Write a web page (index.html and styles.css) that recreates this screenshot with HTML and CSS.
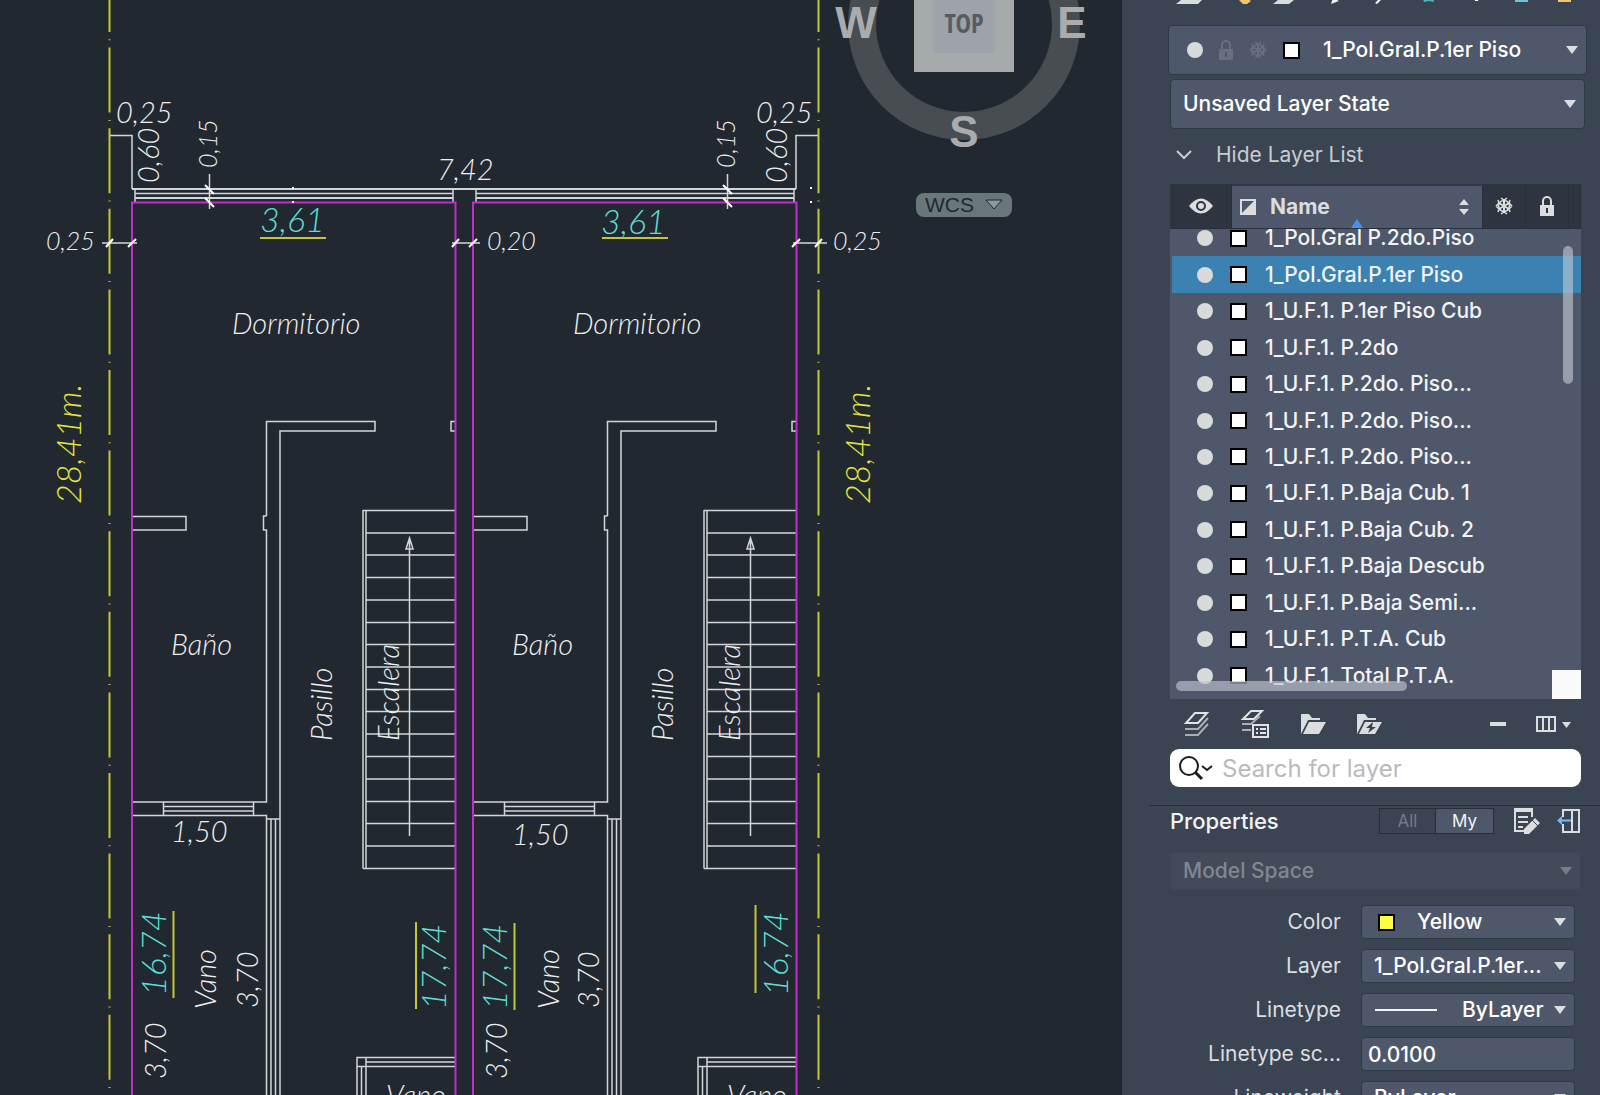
FILE: index.html
```html
<!DOCTYPE html>
<html lang="en">
<head>
<meta charset="utf-8">
<title>Floor plan – layers</title>
<link rel="stylesheet" href="styles.css">
</head>
<body>
<div class="app">
<main class="canvas">
<svg class="plan" viewBox="0 0 1121 1095" preserveAspectRatio="xMinYMin slice" role="img" aria-label="First floor plan">
  <defs>
    <g id="unit">
      <path class="wall" d="M135 193.5H453M135 189V202M453 189V202"/>
      <path class="wall heavy" d="M135 198H453"/>
      <path class="wall" d="M266.5 516V421.500H375V431H280V1095M266.500 516H263.500V530H266.500V802H132M132 516.500H186V530H132M455 421.500H451V431H455"/>
      <path class="wall" d="M132 815.500H266.500V1095M163.500 802V815.500M253.500 802V815.500M163.500 806.500H253.500M163.500 811H253.500M266.500 819H280M271 819V1095M275.500 819V1095"/>
      <path class="wall" d="M363 868.500V510M366 510V868.500M363 510.500H455M366 533H455M366 555H455M366 577.500H455M366 600H455M366 622.500H455M366 644.500H455M366 667H455M366 689.500H455M366 711.500H455M366 734H455M366 756.500H455M366 779H455M366 801.500H455M366 823.500H455M366 846H455M363 868.500H455"/>
      <path class="wall" d="M409.500 836V538M406 549L409.500 538L413 549Z"/>
      <path class="wall" d="M357 1095V1057.500H455M357 1066.500H455M366 1057.500V1095M366 1062H455M361.500 1066V1095"/>
      <path class="lot" d="M132 1095V202.500H455.500V1095"/>
    </g>
  </defs>
  <path class="axis" d="M109.500 -33V1095M818.500 -33V1095"/>
  <path class="wall" d="M110 135.500H132V189M796 189V135.500H818"/>
  <path class="wall heavy" d="M132 189H796"/>
  <use href="#unit"/>
  <use href="#unit" x="341"/>
  <path class="wall" d="M209.500 174V209M727.500 174V209M102 243H137M452 243H480M793 243H827"/>
  <path class="tick" d="M205 185L214 194M205 198L214 207M723 185L732 194M723 198L732 207M106 247L113 239M128 247L136 239M452 247L459 239M469 247L477 239M792 247L800 239M815 247L822 239"/>
  <path class="dots" d="M292 188h2M292 202h2M810 188h2M810 202h2"/>
  <path class="mark" d="M260 238H326M602 238H668M173.500 911V998M416 922V1009M514.500 923V1010M755.500 905V993"/>
  <g class="note">
    <text x="116" y="123">0,25</text><text x="756" y="123">0,25</text><text x="437" y="180">7,42</text>
    <text x="232" y="334">Dormitorio</text><text x="573" y="334">Dormitorio</text>
    <text x="171" y="655">Baño</text><text x="512" y="655">Baño</text>
    <text x="171" y="842">1,50</text><text x="512" y="845">1,50</text>
    <text x="386" y="1106">Vano</text><text x="727" y="1106">Vano</text>
    <text transform="translate(159 183) rotate(-90)">0,60</text><text transform="translate(787 183) rotate(-90)">0,60</text>
    <text transform="translate(332 741) rotate(-90)">Pasillo</text><text transform="translate(673 741) rotate(-90)">Pasillo</text>
    <text transform="translate(399 741) rotate(-90)">Escalera</text><text transform="translate(740 741) rotate(-90)">Escalera</text>
    <text transform="translate(216 1009) rotate(-90)">Vano</text><text transform="translate(559 1009) rotate(-90)">Vano</text>
    <text transform="translate(258 1008) rotate(-90)">3,70</text><text transform="translate(599 1008) rotate(-90)">3,70</text>
    <text transform="translate(166 1079) rotate(-90)">3,70</text><text transform="translate(507 1079) rotate(-90)">3,70</text>
  </g>
  <g class="note small">
    <text x="46" y="250">0,25</text><text x="487" y="250">0,20</text><text x="833" y="250">0,25</text>
    <text transform="translate(217 168) rotate(-90)">0,15</text><text transform="translate(735 168) rotate(-90)">0,15</text>
  </g>
  <g class="note measure">
    <text x="260" y="232">3,61</text><text x="601" y="234">3,61</text>
    <text transform="translate(166 996) rotate(-90)">16,74</text><text transform="translate(788 996) rotate(-90)">16,74</text>
    <text transform="translate(446 1010) rotate(-90)">17,74</text><text transform="translate(507 1010) rotate(-90)">17,74</text>
  </g>
  <g class="note length">
    <text transform="translate(81 504) rotate(-90)">28,41m.</text><text transform="translate(870 504) rotate(-90)">28,41m.</text>
  </g>
</svg>
<div class="viewcube">
  <svg width="260" height="160" viewBox="0 0 260 160" role="img" aria-label="View cube">
    <circle cx="130" cy="24" r="102" fill="none" stroke="#484d51" stroke-width="28"/>
    <path d="M80-10H180V72H80z" fill="#a7aaab"/><path d="M99-10H161V53H99z" fill="#9da3a8"/>
    <text class="face" x="130" y="33">TOP</text>
    <g class="compass"><text x="22" y="38">W</text><text x="238" y="38">E</text><text x="130" y="147">S</text></g>
  </svg>
  <button class="wcs" type="button">WCS <svg width="18" height="12" viewBox="0 0 18 12"><path d="M1 1H17L9 10Z" fill="#8d9899" stroke="#1f292d" stroke-width="1"/></svg></button>
</div>
</main>

<aside class="panel">
  <svg class="tools" width="411" height="25" viewBox="0 0 411 25" aria-hidden="true">
    <path d="M11 0H32L28 4H6zM108 0H124L119 4H103z" fill="#d9dcde"/><path d="M69 0l7-2 5 3-4 3h-4z" fill="#f3c56c"/>
    <path d="M163-2l6 3-8 3zM212-1l-5 5-2-1 4-4zM304-2h5l-1 3h-3z" fill="#f0f2f3"/>
    <path d="M252-4h11l1 6-5-1-5 1z" fill="#4fb3bf"/><path d="M345-4h13v6h-13z" fill="#6cc5d5"/><path d="M388-4h13v6h-13z" fill="#f3c56c"/>
  </svg>
  <div class="field current">
    <span class="prefix"><i class="bulb"></i>
      <svg class="dim" width="14" height="20" viewBox="0 0 14 20"><path d="M3 9V5a4 4 0 0 1 8 0V9" fill="none" stroke="currentColor" stroke-width="2"/><path d="M0 9H14V20H0zM6 12V17H8V12z" fill="currentColor" fill-rule="evenodd"/></svg>
      <svg class="dim" width="18" height="18" viewBox="0 0 18 18"><use href="#flake"/></svg>
      <i class="swatch"></i></span>
    <select aria-label="Current layer"><option>1_Pol.Gral.P.1er Piso</option></select>
  </div>
  <div class="field state"><select aria-label="Layer state"><option>Unsaved Layer State</option></select></div>
  <button class="toggle" type="button"><svg width="16" height="10" viewBox="0 0 16 10"><path d="M1 1L8 8L15 1" fill="none" stroke="currentColor" stroke-width="2"/></svg>Hide Layer List</button>

  <div class="layers">
  <table>
    <thead><tr>
      <th><svg width="24" height="16" viewBox="0 0 24 16"><path d="M0 8Q12-7 24 8Q12 23 0 8z" fill="#dcdddf"/><circle cx="12" cy="8" r="4" fill="#dcdddf" stroke="#2e3440" stroke-width="2"/></svg></th>
      <th class="name"><svg width="16" height="16" viewBox="0 0 16 16"><path d="M1 1H15V15H1z" fill="none" stroke="#dcdddf" stroke-width="2"/><path d="M14 2V14H2z" fill="#dcdddf"/></svg><span>Name</span><svg class="sort" width="10" height="16" viewBox="0 0 10 16"><path d="M0 6L5 0L10 6zM0 10L5 16L10 10z" fill="#dcdddf"/></svg></th>
      <th><svg width="18" height="18" viewBox="0 0 18 18"><g id="flake" fill="none" stroke="currentColor"><circle cx="9" cy="9" r="5.500" stroke-width="1.500"/><path stroke-width="2" d="M9 3V15M4 6L14 12M14 6L4 12"/><path stroke-width="1.500" d="M6 1L9 3L12 1M6 17L9 15L12 17M1 9L4 6L3 3M17 9L14 6L15 3M1 9L4 12L3 15M17 9L14 12L15 15"/></g></svg></th>
      <th><svg width="14" height="20" viewBox="0 0 14 20"><path d="M3 9V5a4 4 0 0 1 8 0V9" fill="none" stroke="currentColor" stroke-width="2"/><path d="M0 9H14V20H0zM6 12V17H8V12z" fill="currentColor" fill-rule="evenodd"/></svg></th>
      <th></th>
    </tr></thead>
    <tbody>
      <tr><td><i class="bulb"></i></td><td><i class="swatch"></i></td><td>1_Pol.Gral P.2do.Piso</td></tr>
      <tr class="selected"><td><i class="bulb"></i></td><td><i class="swatch"></i></td><td>1_Pol.Gral.P.1er Piso</td></tr>
      <tr><td><i class="bulb"></i></td><td><i class="swatch"></i></td><td>1_U.F.1. P.1er Piso Cub</td></tr>
      <tr><td><i class="bulb"></i></td><td><i class="swatch"></i></td><td>1_U.F.1. P.2do</td></tr>
      <tr><td><i class="bulb"></i></td><td><i class="swatch"></i></td><td>1_U.F.1. P.2do. Piso...</td></tr>
      <tr><td><i class="bulb"></i></td><td><i class="swatch"></i></td><td>1_U.F.1. P.2do. Piso...</td></tr>
      <tr><td><i class="bulb"></i></td><td><i class="swatch"></i></td><td>1_U.F.1. P.2do. Piso...</td></tr>
      <tr><td><i class="bulb"></i></td><td><i class="swatch"></i></td><td>1_U.F.1. P.Baja Cub. 1</td></tr>
      <tr><td><i class="bulb"></i></td><td><i class="swatch"></i></td><td>1_U.F.1. P.Baja Cub. 2</td></tr>
      <tr><td><i class="bulb"></i></td><td><i class="swatch"></i></td><td>1_U.F.1. P.Baja Descub</td></tr>
      <tr><td><i class="bulb"></i></td><td><i class="swatch"></i></td><td>1_U.F.1. P.Baja Semi...</td></tr>
      <tr><td><i class="bulb"></i></td><td><i class="swatch"></i></td><td>1_U.F.1. P.T.A. Cub</td></tr>
      <tr><td><i class="bulb"></i></td><td><i class="swatch"></i></td><td>1_U.F.1. Total P.T.A.</td></tr>
    </tbody>
  </table>
  <i class="bar-v"></i><i class="bar-h"></i><i class="corner"></i>
  </div>

  <div class="actions">
    <button type="button" aria-label="New layer"><svg width="26" height="26" viewBox="0 0 26 26" fill="none"><path d="M11 2H23L14 12H2z" stroke="#e2e3e5" stroke-width="2"/><path d="M1 18H14L24 7M1 24H14L24 13" stroke="#a9adb4" stroke-width="2"/></svg></button>
    <button type="button" aria-label="Layer states"><svg width="30" height="30" viewBox="0 0 30 30" fill="none"><path d="M11 2H22L14 10H3z" stroke="#e2e3e5" stroke-width="2"/><path d="M2 15H11L20 7M2 21H11" stroke="#a9adb4" stroke-width="2"/><path d="M13 16H28V28H13z" fill="#3b4352" stroke="#e2e3e5" stroke-width="2"/><path d="M16 20h2M20 20h6M16 24h2M20 24h6" stroke="#e2e3e5" stroke-width="2"/></svg></button>
    <button type="button" aria-label="New group"><svg width="26" height="20" viewBox="0 0 26 20"><path d="M1 20V0H9L12 4H20V6H8zM9 8H26L19 20H3z" fill="#dcdddf"/></svg></button>
    <button type="button" aria-label="New dynamic group"><svg width="26" height="20" viewBox="0 0 26 20"><path d="M1 20V0H9L12 4H20V6H8zM9 8H26L19 20H3z" fill="#dcdddf"/><path d="M17 8L10 14H14L12 19L20 13H16z" fill="#3b4352"/></svg></button>
    <button class="minus" type="button" aria-label="Remove layer"><svg width="16" height="4" viewBox="0 0 16 4"><path d="M0 0H16V4H0z" fill="#dcdddf"/></svg></button>
    <button type="button" aria-label="Columns"><svg width="36" height="18" viewBox="0 0 36 18"><path d="M1 2H19V16H1zM7 2V16M13 2V16" fill="none" stroke="#dcdddf" stroke-width="2"/><path d="M26 7H35L30.500 13z" fill="#dcdddf"/></svg></button>
  </div>

  <label class="search">
    <svg width="34" height="26" viewBox="0 0 34 26" fill="none" stroke="#1c1c1e" stroke-width="2"><circle cx="10" cy="11" r="9"/><path d="M16 17L23 24" stroke-width="3"/><path d="M23 11L28 15L33 11"/></svg>
    <input type="text" placeholder="Search for layer" aria-label="Search for layer">
  </label>

  <section class="props">
    <header>
      <h2>Properties</h2>
      <div class="segment"><button type="button">All</button><button class="on" type="button">My</button></div>
      <button type="button" aria-label="Customize"><svg width="28" height="28" viewBox="0 0 28 28"><path d="M11 24H2V2H19V10" fill="none" stroke="#dcdddf" stroke-width="2"/><path d="M1 1H20V5H1zM5 9H15V11H5zM5 14H15V16H5zM5 19H10V21H5zM22 11L27 16L16 27H11V22z" fill="#dcdddf"/><path d="M19 13L25 19" stroke="#3b4352"/></svg></button>
      <button type="button" aria-label="Dock"><svg width="24" height="26" viewBox="0 0 24 26" fill="none"><path d="M6 9V2H22V24H6V16M15 2V24" stroke="#dcdddf" stroke-width="2"/><path d="M3 12.500H14" stroke="#78b8f0" stroke-width="2"/><path d="M0 12.500L5 8V17z" fill="#78b8f0"/></svg></button>
    </header>
    <div class="field space"><select disabled aria-label="Space"><option>Model Space</option></select></div>
    <div class="grid">
      <label for="color">Color</label><div class="field color"><span class="prefix"><i class="swatch yellow"></i></span><select id="color"><option>Yellow</option></select></div>
      <label for="layer">Layer</label><div class="field"><select id="layer"><option>1_Pol.Gral.P.1er...</option></select></div>
      <label for="ltype">Linetype</label><div class="field ltype"><span class="prefix"><i class="line"></i></span><select id="ltype"><option>ByLayer</option></select></div>
      <label for="scale">Linetype sc...</label><input id="scale" type="text" value="0.0100">
      <label for="lweight">Lineweight</label><div class="field"><select id="lweight"><option>ByLayer</option></select></div>
    </div>
  </section>
</aside>
</div>
</body>
</html>
```
FILE: styles.css
```css
* { box-sizing: border-box; }
body { margin: 0; background: #222830; color: #f2f3f5; font: 21px/24px Inter, "Liberation Sans", sans-serif; }
button, select, input { font: inherit; color: inherit; margin: 0; }
button { background: none; border: 0; padding: 0; display: flex; align-items: center; }
svg { display: block; flex: none; }
.app { display: flex; height: 100vh; overflow: hidden; }

/* drawing area */
.canvas { flex: 1; min-width: 0; position: relative; overflow: hidden; background: #22282f; }
.plan { width: 100%; height: 100%; }
.wall { fill: none; stroke: #d3d6d8; stroke-width: 1.5; }
.heavy { stroke-width: 2; }
.lot { fill: none; stroke: #c22ccb; stroke-width: 2; }
.axis { fill: none; stroke: #c3c735; stroke-width: 2; stroke-dasharray: 65 7.3 1 7.3; }
.mark { fill: none; stroke: #c3c735; stroke-width: 2; }
.tick { fill: none; stroke: #fff; stroke-width: 2; }
.dots { stroke: #fff; stroke-width: 2; }
.note { font: italic 300 29px Lato, sans-serif; fill: #eceeef; }
.note.small { font-size: 25px; }
.note.measure { font-size: 34px; fill: #5fdcd3; }
.note.length { font-size: 34px; fill: #e2e63c; }

.viewcube { position: absolute; top: 0; right: 27px; width: 260px; display: flex; flex-direction: column; align-items: center; gap: 33px; }
.face { font: bold 26px "Liberation Sans Narrow", "Open Sans Condensed", "DejaVu Sans Condensed", sans-serif; fill: #565c61; text-anchor: middle; }
.compass { font: bold 44px "Liberation Sans", sans-serif; fill: #a9acae; text-anchor: middle; }
.wcs { width: 96px; height: 24px; padding: 0 9px; justify-content: space-between; border-radius: 8px; background: #69767a; color: #1f292d; font: 21px "Liberation Sans", sans-serif; }

/* side panel */
.panel { flex: 0 0 479px; min-width: 0; display: flex; flex-direction: column; padding: 0 19px 0 48px; background: #3b4453; border-left: 1px solid #1f262f; }
.panel > * { flex: none; }
.field { position: relative; height: 34px; border: 1px solid #2c3b43; border-radius: 4px; background: #4e586a; }
.field::after { content: ""; position: absolute; right: 8px; top: 50%; margin-top: -4px; border: 6px solid transparent; border-top: 8px solid #dcdddf; border-bottom: 0; pointer-events: none; }
.field select { width: 100%; height: 100%; padding: 0 0 0 12px; border: 0; background: none; appearance: none; color: #fff; font-weight: 500; }
.prefix { position: absolute; left: 18px; top: 0; bottom: 0; display: flex; align-items: center; gap: 16px; pointer-events: none; }
.dim { color: #687080; }
.bulb { display: block; width: 16px; height: 16px; border-radius: 50%; background: #d9dbda; }
.swatch { display: block; width: 17px; height: 17px; border: 2px solid #000; background: #fff; }
.swatch.yellow { background: #ffff42; }
.current { height: 50px; margin: 0 -6px 4px -2px; }
.current select { padding-left: 154px; }
.state { height: 50px; margin-right: -4px; }
.toggle { height: 52px; margin-bottom: 3px; padding-left: 6px; gap: 24px; color: #c9ccd1; }

.layers { position: relative; height: 515px; overflow: hidden; background: #4e586a; }
table, tbody, thead, tr, th, td { display: block; padding: 0; }
thead { position: relative; z-index: 1; }
thead tr { display: grid; grid-template-columns: 62px 1fr 43px 43px 12px; height: 45px; background: #2e3440; border-bottom: 1px solid #2a303b; color: #dcdddf; }
th { display: flex; align-items: center; justify-content: center; border-right: 1px solid #292f3a; }
th.name { position: relative; justify-content: flex-start; gap: 14px; padding: 0 13px 0 8px; background: #4e586a; border-top: 2px solid #333a47; }
th.name::after { content: ""; position: absolute; left: 119px; bottom: 0; border: 6px solid transparent; border-bottom: 9px solid #4a90f0; border-top: 0; }
.sort { margin-left: auto; }
tbody { display: grid; grid-template-rows: repeat(13, 1fr); height: 474px; margin-top: -9px; font-weight: 500; }
tbody tr { display: grid; grid-template-columns: 33px 35px 1fr; align-items: center; margin-left: 2px; padding-left: 25px; white-space: nowrap; }
.selected { background: #3b82b3; }
.bar-v { position: absolute; right: 8px; top: 62px; width: 10px; height: 138px; border-radius: 5px; background: rgba(200, 203, 212, .6); }
.bar-h { position: absolute; left: 6px; bottom: 8px; width: 231px; height: 10px; border-radius: 5px; background: rgba(190, 195, 204, .65); }
.corner { position: absolute; right: 0; bottom: 0; width: 29px; height: 29px; background: #fafafa; }

.actions { display: flex; align-items: center; height: 50px; padding: 0 9px 0 14px; gap: 30px; }
.minus { margin-left: auto; }
.search { display: flex; align-items: center; gap: 9px; height: 38px; padding: 0 9px; border-radius: 9px; background: #fff; }
.search input { flex: 1; min-width: 0; border: 0; padding: 0; background: none; font-size: 24px; outline: 0; color: #222; }
.search input::placeholder { color: #b9babd; opacity: 1; }

.props { margin: 18px -19px 0 -21px; padding: 0 19px 0 21px; border-top: 1px solid #262d37; }
.props header { display: flex; align-items: center; height: 30px; margin-bottom: 16px; }
h2 { margin: 0 auto 0 0; font-size: 22px; font-weight: 500; }
.segment { display: flex; height: 26px; margin-right: 19px; border: 1px solid #272e38; font-size: 17px; }
.segment button { width: 55px; justify-content: center; color: #747b87; }
.segment .on { width: 58px; background: #4e586a; color: #f2f3f5; border-left: 1px solid #272e38; }
.props header > button:last-child { margin-left: 16px; }
.space { height: 38px; margin-bottom: 15px; background: #434b5b; border-color: #3e4655; }
.field.space select { color: #808792; opacity: 1; }
.space::after { border-top-color: #747c89; }
.grid { display: grid; grid-template-columns: 171px minmax(0, 1fr); gap: 10px 20px; padding-right: 6px; align-items: center; }
.grid label { text-align: right; color: #dcdee1; white-space: nowrap; }
.color .prefix { left: 16px; }
.color select { padding-left: 55px; }
.ltype .prefix { left: 13px; }
.line { width: 62px; height: 2px; background: #f2f3f5; }
.ltype select { padding-left: 100px; }
.grid input { width: 100%; min-width: 0; height: 34px; padding: 0 6px; border: 1px solid #2c3b43; border-radius: 4px; background: #4e586a; color: #fff; font-weight: 500; }
```
